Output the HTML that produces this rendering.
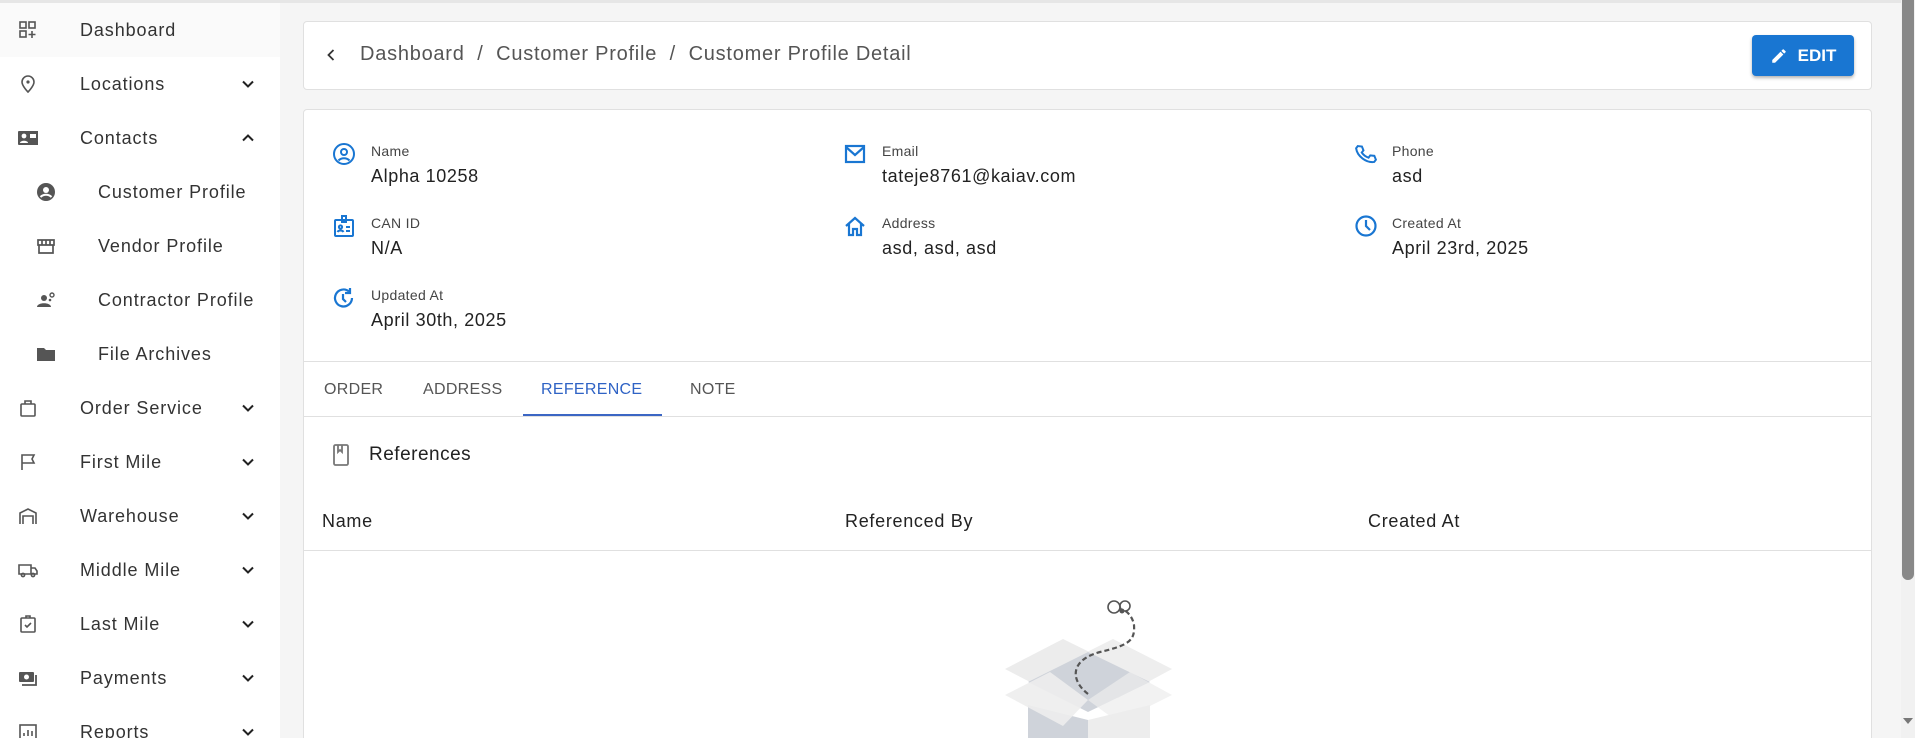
<!DOCTYPE html>
<html style="overflow:hidden;width:1915px;height:738px"><head><meta charset="utf-8"><style>
*{box-sizing:border-box;margin:0;padding:0}
body{width:1915px;height:738px;overflow:hidden;background:#f5f5f5;font-family:"Liberation Sans",sans-serif;color:#222;position:relative}
.abs{position:absolute}
.sb{left:0;top:0;width:280px;height:738px;background:#fff}
.topline{left:0;top:0;width:1901px;height:3px;background:#e6e6e6}
.item{position:absolute;left:0;width:280px;height:54px;font-size:18px;color:#333;display:flex;align-items:center;letter-spacing:.9px}
.item .ic{position:absolute;left:18px;width:20px;height:20px}
.item .t{position:absolute;left:80px}
.item.sub .ic{left:36px}
.item.sub .t{left:98px}
.item .ch{position:absolute;left:240px;width:16px;height:16px}
.card{position:absolute;background:#fff;border:1px solid #e0e0e0;border-radius:4px}
.lbl{position:absolute;font-size:14px;color:#444;letter-spacing:.3px}
.val{position:absolute;font-size:18px;color:#222;letter-spacing:.6px}
.fic{position:absolute;width:24px;height:24px}
.tab{position:absolute;top:381px;font-size:16px;color:#555;letter-spacing:.3px}
.th{position:absolute;top:511px;font-size:18px;letter-spacing:.7px}
</style></head><body>
<div class="abs sb"></div>
<div class="abs topline"></div>
<div class="abs" style="left:0;top:3px;width:280px;height:54px;background:#fafafa"></div>
<svg width="0" height="0" style="position:absolute"><defs>
<symbol id="chd" viewBox="0 0 16 16"><path d="M3 5.5l5 5 5-5" fill="none" stroke="#222" stroke-width="2"/></symbol>
<symbol id="chu" viewBox="0 0 16 16"><path d="M3 10.5l5-5 5 5" fill="none" stroke="#222" stroke-width="2"/></symbol>
</defs></svg>

<div class="item" style="top:3px"><svg class="ic" viewBox="0 0 20 20"><g fill="none" stroke="#555" stroke-width="1.6"><rect x="2" y="2" width="6" height="6"/><rect x="11" y="2" width="6" height="6"/><rect x="2" y="11" width="6" height="6"/><path d="M14 11v7M10.5 14.5h7"/></g></svg><span class="t">Dashboard</span></div>
<div class="item" style="top:57px"><svg class="ic" viewBox="0 0 20 20"><path d="M10 18s6-6 6-10a6 6 0 0 0-12 0c0 4 6 10 6 10z" fill="none" stroke="#555" stroke-width="1.6"/><circle cx="10" cy="8" r="1.6" fill="#555"/></svg><span class="t">Locations</span><svg class="ch"><use href="#chd"/></svg></div>
<div class="item" style="top:111px"><svg class="ic" viewBox="0 0 20 20"><rect x="0" y="3" width="21" height="14" rx="1" fill="#555"/><circle cx="6" cy="8" r="2.4" fill="#fff"/><path d="M2 15c0-3 8-3 8 0z" fill="#fff"/><rect x="12" y="6" width="6" height="4" fill="#fff"/></svg><span class="t">Contacts</span><svg class="ch"><use href="#chu"/></svg></div>
<div class="item sub" style="top:165px"><svg class="ic" viewBox="0 0 20 20"><circle cx="10" cy="10" r="9" fill="#555"/><circle cx="10" cy="8" r="3" fill="#fff"/><path d="M4.5 15c3-3 8-3 11 0" stroke="#fff" stroke-width="2" fill="none"/></svg><span class="t">Customer Profile</span></div>
<div class="item sub" style="top:219px"><svg class="ic" viewBox="0 0 20 20"><g fill="none" stroke="#555" stroke-width="1.7"><path d="M2 4h16v5H2zM3 9v8h14V9M6 4v5M10 4v5M14 4v5"/></g></svg><span class="t">Vendor Profile</span></div>
<div class="item sub" style="top:273px"><svg class="ic" viewBox="0 0 20 20"><circle cx="8" cy="8" r="3" fill="#555"/><path d="M1 17c0-5 14-5 14 0z" fill="#555"/><circle cx="16" cy="5" r="2" fill="none" stroke="#555" stroke-width="1.4"/><circle cx="14" cy="10" r="1.3" fill="#555"/></svg><span class="t">Contractor Profile</span></div>
<div class="item sub" style="top:327px"><svg class="ic" viewBox="0 0 20 20"><path d="M1 4h7l2 2h9v11H1z" fill="#555"/></svg><span class="t">File Archives</span></div>
<div class="item" style="top:381px"><svg class="ic" viewBox="0 0 20 20"><g fill="none" stroke="#555" stroke-width="1.6"><rect x="3" y="6" width="14" height="12" rx="1"/><path d="M7 6V3h6v3"/></g></svg><span class="t">Order Service</span><svg class="ch"><use href="#chd"/></svg></div>
<div class="item" style="top:435px"><svg class="ic" viewBox="0 0 20 20"><path d="M4 18V3h12l-2 4 2 4H4" fill="none" stroke="#555" stroke-width="1.6"/></svg><span class="t">First Mile</span><svg class="ch"><use href="#chd"/></svg></div>
<div class="item" style="top:489px"><svg class="ic" viewBox="0 0 20 20"><g fill="none" stroke="#555" stroke-width="1.6"><path d="M2 18V7l8-4 8 4v11M5 18v-8h10v8"/></g></svg><span class="t">Warehouse</span><svg class="ch"><use href="#chd"/></svg></div>
<div class="item" style="top:543px"><svg class="ic" viewBox="0 0 20 20"><g fill="none" stroke="#555" stroke-width="1.6"><path d="M1 5h12v9H1zM13 8h4l2 3v3h-6"/><circle cx="5" cy="15" r="1.6"/><circle cx="15" cy="15" r="1.6"/></g></svg><span class="t">Middle Mile</span><svg class="ch"><use href="#chd"/></svg></div>
<div class="item" style="top:597px"><svg class="ic" viewBox="0 0 20 20"><g fill="none" stroke="#555" stroke-width="1.6"><rect x="3" y="4" width="14" height="14" rx="1"/><path d="M7 11l2 2 4-4M8 4V2h4v2"/></g></svg><span class="t">Last Mile</span><svg class="ch"><use href="#chd"/></svg></div>
<div class="item" style="top:651px"><svg class="ic" viewBox="0 0 20 20"><rect x="1" y="4" width="15" height="10" rx="1" fill="#555"/><circle cx="8.5" cy="9" r="2.5" fill="#fff"/><path d="M18 7v10H4" fill="none" stroke="#555" stroke-width="1.8"/></svg><span class="t">Payments</span><svg class="ch"><use href="#chd"/></svg></div>
<div class="item" style="top:705px"><svg class="ic" viewBox="0 0 20 20"><g fill="none" stroke="#555" stroke-width="1.6"><rect x="2" y="3" width="16" height="15"/><path d="M6 14v-3M10 14V8M14 14v-5"/></g></svg><span class="t">Reports</span><svg class="ch"><use href="#chd"/></svg></div>

<div class="card" style="left:303px;top:21px;width:1569px;height:69px"></div>
<svg class="abs" style="left:323px;top:47px" width="16" height="16" viewBox="0 0 16 16"><path d="M10.5 3l-5 5 5 5" fill="none" stroke="#333" stroke-width="1.8"/></svg>
<div class="abs" style="left:360px;top:43px;font-size:20px;color:#555;letter-spacing:.75px;white-space:pre">Dashboard  /  Customer Profile  /  Customer Profile Detail</div>
<div class="abs" style="left:1752px;top:35px;width:102px;height:41px;background:#1976d2;border-radius:4px;box-shadow:0 2px 3px rgba(0,0,0,.3);color:#fff;font-size:17px;font-weight:bold;display:flex;align-items:center;justify-content:center;gap:10px"><svg width="18" height="18" viewBox="0 0 24 24"><path d="M3 17.25V21h3.75L17.81 9.94l-3.75-3.75zM20.71 7.04a1 1 0 0 0 0-1.41l-2.34-2.34a1 1 0 0 0-1.41 0l-1.83 1.83 3.75 3.75z" fill="#fff"/></svg>EDIT</div>

<div class="card" style="left:303px;top:109px;width:1569px;height:640px"></div>
<svg class="fic" style="left:332px;top:142px" viewBox="0 0 24 24"><g fill="none" stroke="#1976d2" stroke-width="2"><circle cx="12" cy="12" r="10"/><circle cx="12" cy="10" r="3"/><path d="M6.5 18.5c3-3 8-3 11 0"/></g></svg>
<div class="lbl" style="left:371px;top:143px">Name</div><div class="val" style="left:371px;top:166px">Alpha 10258</div>
<svg class="fic" style="left:843px;top:142px" viewBox="0 0 24 24"><g fill="none" stroke="#1976d2" stroke-width="2.2"><rect x="3" y="4" width="18" height="16"/><path d="M3 5l9 8 9-8"/></g></svg>
<div class="lbl" style="left:882px;top:143px">Email</div><div class="val" style="left:882px;top:166px">tateje8761@kaiav.com</div>
<svg class="fic" style="left:1354px;top:142px" viewBox="0 0 24 24"><path d="M5 3l4 1 1 4-2 2c1.5 3 3 4.5 6 6l2-2 4 1 1 4-2 2C11 21 3 13 3 5z" fill="none" stroke="#1976d2" stroke-width="2" transform="rotate(-8 12 12)"/></svg>
<div class="lbl" style="left:1392px;top:143px">Phone</div><div class="val" style="left:1392px;top:166px">asd</div>

<svg class="fic" style="left:332px;top:214px" viewBox="0 0 24 24"><g fill="none" stroke="#1976d2" stroke-width="2"><rect x="3" y="6" width="18" height="16" rx="1"/><rect x="10" y="2" width="4" height="6"/><circle cx="8.5" cy="13" r="1.6"/><path d="M5.5 18c1-2 5-2 6 0M14 13h4M14 17h4"/></g></svg>
<div class="lbl" style="left:371px;top:215px">CAN ID</div><div class="val" style="left:371px;top:238px">N/A</div>
<svg class="fic" style="left:843px;top:214px" viewBox="0 0 24 24"><path d="M3 12l9-8 9 8M6 10v11h4v-6h4v6h4V10" fill="none" stroke="#1976d2" stroke-width="2.2"/></svg>
<div class="lbl" style="left:882px;top:215px">Address</div><div class="val" style="left:882px;top:238px">asd, asd, asd</div>
<svg class="fic" style="left:1354px;top:214px" viewBox="0 0 24 24"><g fill="none" stroke="#1976d2" stroke-width="2.2"><circle cx="12" cy="12" r="9.5"/><path d="M12 6v6l4 4"/></g></svg>
<div class="lbl" style="left:1392px;top:215px">Created At</div><div class="val" style="left:1392px;top:238px">April 23rd, 2025</div>

<svg class="fic" style="left:332px;top:286px" viewBox="0 0 24 24"><g fill="none" stroke="#1976d2" stroke-width="2.2"><path d="M20 12a8.5 8.5 0 1 1-3-6.5"/><path d="M18 2v5h-5"/><path d="M11 8v5l3 3"/></g></svg>
<div class="lbl" style="left:371px;top:287px">Updated At</div><div class="val" style="left:371px;top:310px">April 30th, 2025</div>

<div class="abs" style="left:304px;top:361px;width:1567px;height:1px;background:#e0e0e0"></div>
<div class="tab" style="left:324px">ORDER</div>
<div class="tab" style="left:423px">ADDRESS</div>
<div class="tab" style="left:541px;color:#2f63c5">REFERENCE</div>
<div class="tab" style="left:690px">NOTE</div>
<div class="abs" style="left:523px;top:414px;width:139px;height:2px;background:#3b66c4"></div>
<div class="abs" style="left:304px;top:416px;width:1567px;height:1px;background:#e0e0e0"></div>

<svg class="abs" style="left:332px;top:443px" width="18" height="24" viewBox="0 0 18 24"><g fill="none" stroke="#777" stroke-width="1.8"><rect x="2" y="2" width="14" height="20" rx="1.5"/><path d="M6 2v7l2-2 2 2V2"/></g></svg>
<div class="abs" style="left:369px;top:444px;font-size:19px;color:#222;letter-spacing:.5px">References</div>

<div class="th" style="left:322px">Name</div>
<div class="th" style="left:845px">Referenced By</div>
<div class="th" style="left:1368px">Created At</div>
<div class="abs" style="left:304px;top:550px;width:1567px;height:1px;background:#e0e0e0"></div>

<svg class="abs" style="left:0;top:0" width="1915" height="738">
<polygon points="1005,669 1063,639 1122,668 1063,699" fill="#ececec"/>
<polygon points="1055,668 1113,639 1172,669 1118,698" fill="#eeeeee"/>
<polygon points="1028,682 1088,652 1150,682 1088,712" fill="#cfd3da"/>
<polygon points="1028,705 1088,720 1088,738 1028,738" fill="#cfd3da"/>
<polygon points="1088,720 1150,705 1150,738 1088,738" fill="#ededed"/>
<polygon points="1005,695 1050,672 1088,700 1063,726" fill="#ededed" opacity=".9"/>
<polygon points="1088,700 1130,672 1172,695 1118,722" fill="#ededed" opacity=".7"/>
<path d="M1088,694 C1070,680 1070,660 1100,652 C1130,645 1135,640 1134,625 C1133,618 1128,612 1124,610" fill="none" stroke="#555" stroke-width="2.2" stroke-dasharray="5,3"/>
<circle cx="1114" cy="607" r="6" fill="none" stroke="#555" stroke-width="1.6"/>
<circle cx="1125" cy="606" r="5" fill="none" stroke="#555" stroke-width="1.6"/>
<circle cx="1122" cy="611" r="2.5" fill="#555"/>
</svg>

<div class="abs" style="left:1901px;top:0;width:14px;height:738px;background:#f1f1f1"></div>
<div class="abs" style="left:1902px;top:0;width:12px;height:580px;background:#888;border-radius:0 0 6px 6px"></div>
<svg class="abs" style="left:1902px;top:716px" width="12" height="10" viewBox="0 0 12 10"><path d="M1 2h10l-5 6z" fill="#777"/></svg>
</body></html>
